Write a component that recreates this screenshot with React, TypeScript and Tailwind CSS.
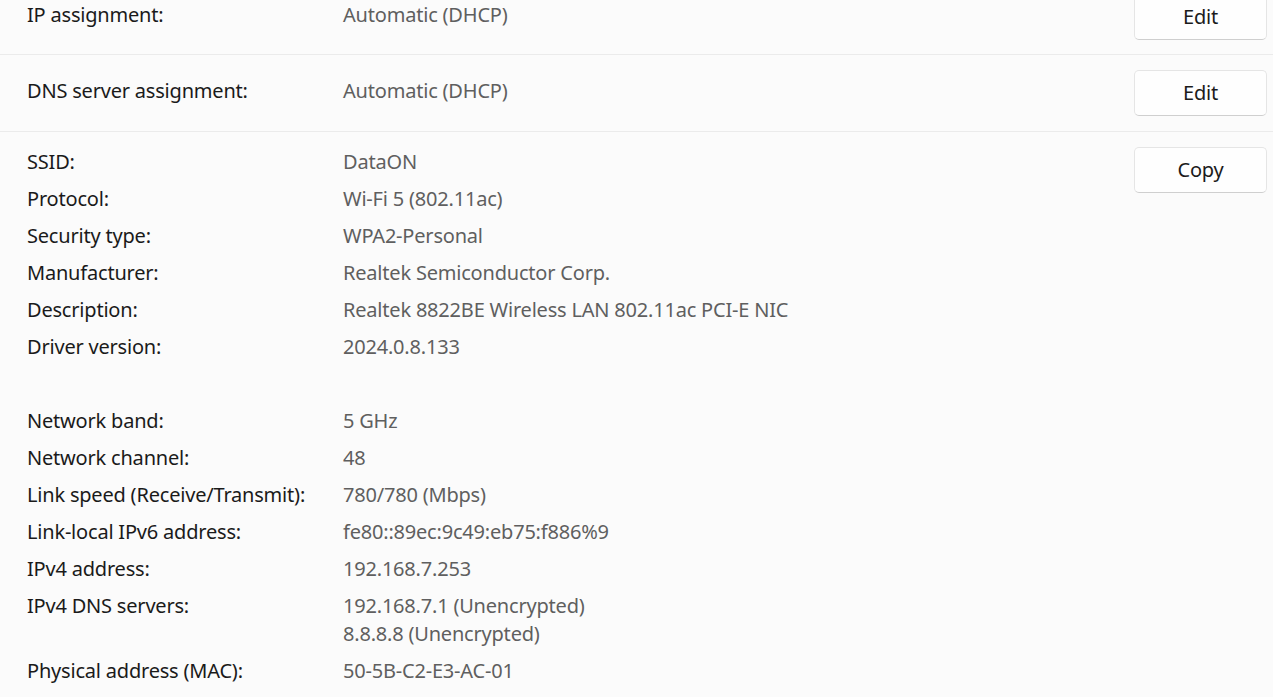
import React from "react";

const font = { fontFamily: '"Noto Sans", "Segoe UI", sans-serif' };

function Btn({ label }: { label: string }) {
  return (
    <button className="w-[133px] h-[46px] shrink-0 rounded-[5px] bg-[#fefefe] border border-[#e5e5e5] border-b-[#cfcfcf] text-[20px] text-[#1b1b1b] flex items-center justify-center">
      {label}
    </button>
  );
}

const rows: [string, string[]][] = [
  ["SSID:", ["DataON"]],
  ["Protocol:", ["Wi-Fi 5 (802.11ac)"]],
  ["Security type:", ["WPA2-Personal"]],
  ["Manufacturer:", ["Realtek Semiconductor Corp."]],
  ["Description:", ["Realtek 8822BE Wireless LAN 802.11ac PCI-E NIC"]],
  ["Driver version:", ["2024.0.8.133"]],
  ["", [""]],
  ["Network band:", ["5 GHz"]],
  ["Network channel:", ["48"]],
  ["Link speed (Receive/Transmit):", ["780/780 (Mbps)"]],
  ["Link-local IPv6 address:", ["fe80::89ec:9c49:eb75:f886%9"]],
  ["IPv4 address:", ["192.168.7.253"]],
  ["IPv4 DNS servers:", ["192.168.7.1 (Unencrypted)", "8.8.8.8 (Unencrypted)"]],
  ["Physical address (MAC):", ["50-5B-C2-E3-AC-01"]],
];

export default function App() {
  return (
    <div className="w-[1273px] h-[697px] overflow-hidden bg-[#fbfbfb] tracking-[-0.2px]" style={font}>
      <div className="-mt-[21px]">
        <div className="flex items-center pl-[27px] pr-[6px] pt-[15px] pb-[14px] border-b border-[#ebebeb]">
          <div className="w-[316px] text-[20px] text-[#1a1a1a] pb-[4px]">IP assignment:</div>
          <div className="flex-1 text-[20px] text-[#5f5f5f] pb-[4px]">Automatic (DHCP)</div>
          <Btn label="Edit" />
        </div>
        <div className="flex items-center pl-[27px] pr-[6px] py-[15px] border-b border-[#ebebeb]">
          <div className="w-[316px] text-[20px] text-[#1a1a1a] pb-[4px]">DNS server assignment:</div>
          <div className="flex-1 text-[20px] text-[#5f5f5f] pb-[4px]">Automatic (DHCP)</div>
          <Btn label="Edit" />
        </div>
        <div className="flex items-start pl-[27px] pr-[6px] pt-[15px]">
          <div className="flex-1 flex flex-col gap-[9px] pt-[1px]">
            {rows.map(([k, v], i) => (
              <div key={i} className="flex text-[20px] leading-[28px]">
                <div className="w-[316px] text-[#1a1a1a] shrink-0">{k || "\u00a0"}</div>
                <div className="flex flex-col text-[#5f5f5f]">
                  {v.map((line, j) => (
                    <div key={j}>{line || "\u00a0"}</div>
                  ))}
                </div>
              </div>
            ))}
          </div>
          <Btn label="Copy" />
        </div>
      </div>
    </div>
  );
}
